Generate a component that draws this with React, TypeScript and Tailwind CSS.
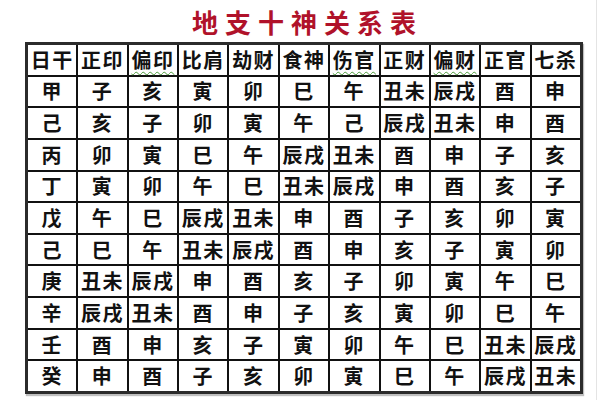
const header = ['日干', '正印', '偏印', '比肩', '劫财', '食神', '伤官', '正财', '偏财', '正官', '七杀'];

// columns flagged by the spell checker in the source picture
const wavy = ['偏印', '伤官', '偏财'];

const rows = [
  ['甲', '子', '亥', '寅', '卯', '巳', '午', '丑未', '辰戌', '酉', '申'],
  ['己', '亥', '子', '卯', '寅', '午', '己', '辰戌', '丑未', '申', '酉'],
  ['丙', '卯', '寅', '巳', '午', '辰戌', '丑未', '酉', '申', '子', '亥'],
  ['丁', '寅', '卯', '午', '巳', '丑未', '辰戌', '申', '酉', '亥', '子'],
  ['戊', '午', '巳', '辰戌', '丑未', '申', '酉', '子', '亥', '卯', '寅'],
  ['己', '巳', '午', '丑未', '辰戌', '酉', '申', '亥', '子', '寅', '卯'],
  ['庚', '丑未', '辰戌', '申', '酉', '亥', '子', '卯', '寅', '午', '巳'],
  ['辛', '辰戌', '丑未', '酉', '申', '子', '亥', '寅', '卯', '巳', '午'],
  ['壬', '酉', '申', '亥', '子', '寅', '卯', '午', '巳', '丑未', '辰戌'],
  ['癸', '申', '酉', '子', '亥', '卯', '寅', '巳', '午', '辰戌', '丑未'],
];

const Cell = ({ text }: { text: string }) => (
  <div className="flex items-center justify-center bg-white">
    <span
      className={
        wavy.includes(text)
          ? 'underline decoration-wavy decoration-[#4a9a3a] decoration-1 underline-offset-[3px]'
          : ''
      }
    >
      {text}
    </span>
  </div>
);

export default function App() {
  return (
    <div
      className="w-[600px] h-[400px] bg-white overflow-hidden"
      style={{ fontFamily: '"Noto Sans CJK SC", "Noto Sans", sans-serif' }}
    >
      <div className="relative w-[600px] h-[400px] flex flex-col">
        <div className="h-[42px] w-[558px] ml-[25px] flex items-center justify-center pt-[2px]">
          <h1 className="text-[26px] leading-none font-bold text-[#b0122a] tracking-[7px] pl-[7px]">
            地支十神关系表
          </h1>
        </div>
        <div className="w-[558px] h-[352px] ml-[25px] grid grid-cols-11 grid-rows-11 gap-[2px] bg-[#111] border-[3px] border-[#2b2b2b] shadow-[1px_2px_1px_rgba(0,0,0,0.25)] text-[20px] font-bold text-[#111] tracking-[1.5px] leading-none">
          {header.map((h, i) => (
            <Cell key={'h' + i} text={h} />
          ))}
          {rows.map((r, ri) => r.map((c, ci) => <Cell key={ri + '-' + ci} text={c} />))}
        </div>
        <div className="absolute top-0 bottom-0 left-[596px] w-px bg-[#e4e4e4]" />
      </div>
    </div>
  );
}
